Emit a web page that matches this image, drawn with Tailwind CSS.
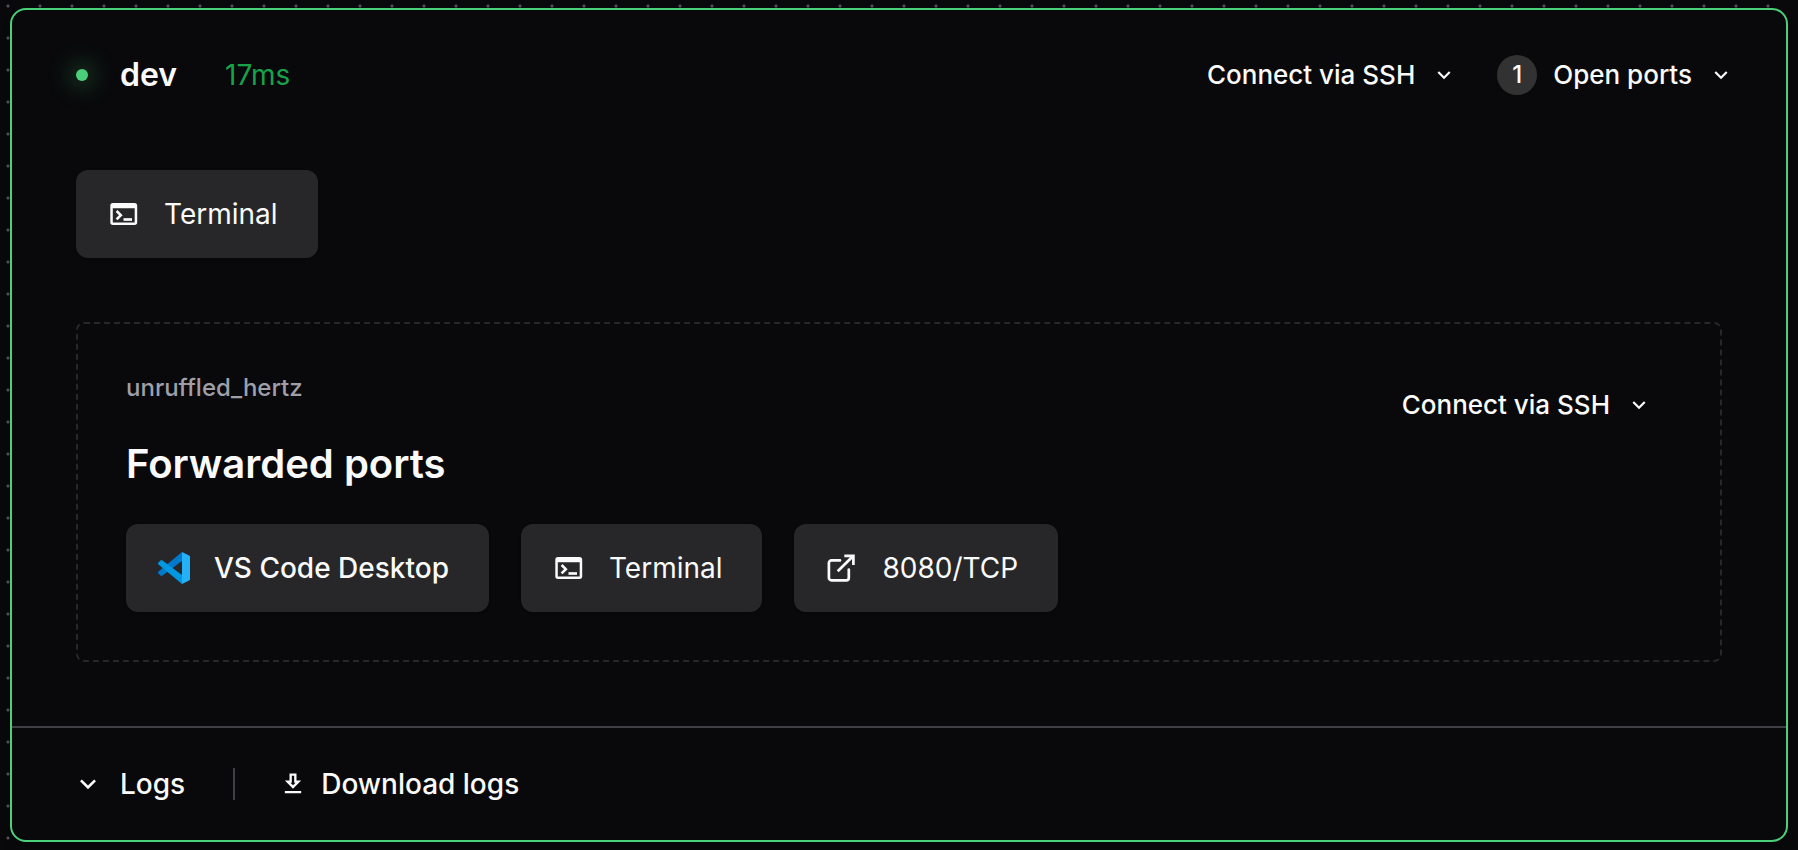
<!DOCTYPE html>
<html lang="en">
<head>
<meta charset="utf-8">
<meta name="viewport" content="width=device-width, initial-scale=1">
<title>dev agent</title>
<script src="https://cdn.jsdelivr.net/npm/@tailwindcss/browser@4"></script>
</head>
<body class="min-h-screen bg-[#09090b] bg-[radial-gradient(circle_at_8px_6px,#52525b_1px,transparent_2px)] bg-[size:32px_32px] pt-2 pr-[10px] pb-2 pl-[10px] font-['Inter',sans-serif] text-zinc-50">
<svg class="hidden" aria-hidden="true">
  <symbol id="chevron" viewBox="0 0 24 24"><path d="M7.410 8.590 12 13.170l4.590-4.580L18 10l-6 6-6-6z" fill="currentColor"/></symbol>
  <symbol id="terminal" viewBox="0 0 32 26"><path fill="currentColor" fill-rule="evenodd" d="M5 2h21.500a2.700 2.700 0 0 1 2.700 2.700v16.600a2.700 2.700 0 0 1-2.700 2.700H5a2.700 2.700 0 0 1-2.700-2.700V4.700A2.700 2.700 0 0 1 5 2zM4.800 7.300v14.200h21.900V7.300z"/><path d="m8.600 10 4.200 4.200-4.200 4.200" fill="none" stroke="currentColor" stroke-width="2.600"/><path d="M15.500 18.500H24" stroke="currentColor" stroke-width="2.700"/></symbol>
</svg>
<main class="flex flex-col rounded-2xl border-2 border-[#4ad07a] bg-[#09090b] shadow-lg">
  <header class="flex items-center justify-between pt-8 pr-[52px] pl-16">
    <div class="flex items-center">
      <span class="size-3 rounded-full bg-[#4ad07a] shadow-[0_0_24px_4px_#4ad07a66]"></span>
      <h1 class="ml-8 text-[32px] leading-[66px] font-semibold">dev</h1>
      <span class="ml-12 text-[28px] leading-[66px] text-[#16a34a]">17ms</span>
    </div>
    <div class="flex items-center gap-10 text-[26px] leading-[66px] font-medium">
      <button type="button" class="flex items-center gap-4">Connect via SSH <svg class="size-[26px]"><use href="#chevron"/></svg></button>
      <button type="button" class="flex items-center gap-4"><span class="flex size-10 items-center justify-center rounded-full bg-[#323232] text-2xl">1</span>Open ports <svg class="size-[26px]"><use href="#chevron"/></svg></button>
    </div>
  </header>
  <div class="flex flex-col gap-16 px-16 pt-[62px] pb-16">
    <div class="flex">
      <a href="#terminal-dev" class="flex h-[88px] items-center gap-6 rounded-xl bg-[#27272a] pr-10 pl-8 text-[28px] shadow-sm"><svg class="h-[26px] w-8"><use href="#terminal"/></svg>Terminal</a>
    </div>
    <section class="flex flex-col rounded-lg border-2 border-dashed border-[#27272a] p-12">
      <div class="flex items-start justify-between">
        <div>
          <p class="text-2xl leading-8 font-medium text-zinc-400">unruffled_hertz</p>
          <h2 class="mt-8 text-[40px] leading-[56px] font-semibold">Forwarded ports</h2>
        </div>
        <button type="button" class="mt-4 mr-5 flex items-center gap-4 text-[26px] leading-[34px] font-medium">Connect via SSH <svg class="size-[26px]"><use href="#chevron"/></svg></button>
      </div>
      <div class="mt-8 flex gap-8">
        <a href="#vscode" class="flex h-[88px] items-center gap-6 rounded-xl bg-[#27272a] pr-10 pl-8 text-[28px] font-medium shadow-sm">
          <svg class="size-8" viewBox="0 0 32 32"><path fill="#0179cb" d="M24 0v9L4.500 23.500a1.500 1.500 0 0 1-2-.1L.5 21.600a1.400 1.400 0 0 1 0-2.100z"/><path fill="#0098e0" d="M24 32v-9L4.500 8.500a1.500 1.500 0 0 0-2 .1L.5 10.400a1.400 1.400 0 0 0 0 2.100z"/><path fill="#24b1f8" d="M24 0l8 4v24l-8 4z"/></svg>VS Code Desktop</a>
        <a href="#terminal-container" class="flex h-[88px] items-center gap-6 rounded-xl bg-[#27272a] pr-10 pl-8 text-[28px] shadow-sm"><svg class="h-[26px] w-8"><use href="#terminal"/></svg>Terminal</a>
        <a href="#port-8080" class="flex h-[88px] items-center gap-6 rounded-xl bg-[#27272a] pr-10 pl-8 text-[28px] shadow-sm">
          <svg class="size-8" viewBox="0 0 32 32" fill="none" stroke="currentColor" stroke-width="2.700" stroke-linecap="round"><path d="M14 8.400H5.500A2.600 2.600 0 0 0 2.900 11v14.700a2.600 2.600 0 0 0 2.600 2.600h14.700a2.600 2.600 0 0 0 2.600-2.600V17.500"/><path stroke-linecap="butt" d="M18.300 3.800h9.100v9.100M27.400 3.800 11.700 19.300"/></svg>8080/TCP</a>
      </div>
    </section>
  </div>
  <footer class="flex items-center border-t-2 border-[#3f3f46] px-[60px] text-[28px] leading-[112px] font-medium">
    <button type="button" class="flex items-center gap-4"><svg class="size-8"><use href="#chevron"/></svg>Logs</button>
    <span class="mr-11 ml-12 h-8 w-0.5 bg-[#3f3f46]"></span>
    <button type="button" class="flex items-center gap-3.5"><svg class="size-7" viewBox="0 0 24 24" fill="currentColor"><path d="M19 9h-4V3H9v6H5l7 7 7-7zm-8 2V5h2v6h1.170L12 13.170 9.830 11H11zm-6 7h14v2H5z"/></svg>Download logs</button>
  </footer>
</main>
</body>
</html>
